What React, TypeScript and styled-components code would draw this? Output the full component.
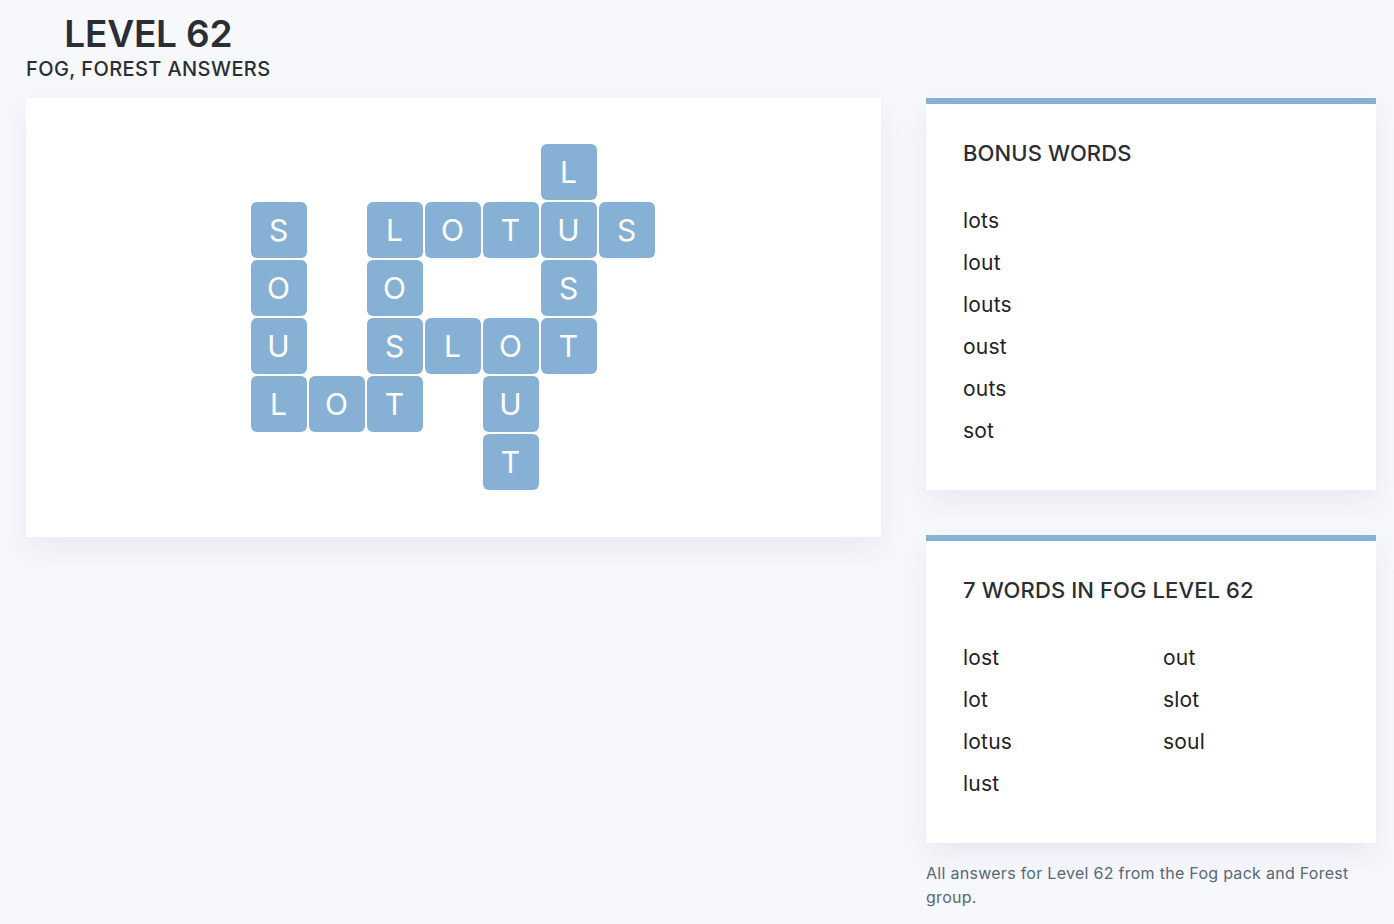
import React from "react";
import styled, { createGlobalStyle } from "styled-components";

const Global = createGlobalStyle`
  html, body { margin: 0; padding: 0; background: #f7f8fc; }
  body { font-family: Inter, "Noto Sans", "Liberation Sans", sans-serif; color: #2b2e34; }
`;

const Page = styled.div`
  padding: 13px 18px 20px 26px;
`;

const Header = styled.header`
  display: inline-flex;
  flex-direction: column;
  align-items: center;
  margin-bottom: 15px;
`;

const Title = styled.h1`
  margin: 0;
  font-size: 37px;
  line-height: 42px;
  font-weight: 600;
  letter-spacing: -0.2px;
  color: #2b2e34;
`;

const Subtitle = styled.h2`
  margin: 0;
  font-size: 20px;
  line-height: 28px;
  font-weight: 500;
  letter-spacing: 0.4px;
  color: #2b2e34;
`;

const Main = styled.div`
  display: flex;
  align-items: flex-start;
  gap: 45px;
`;

const BoardCard = styled.section`
  width: 855px;
  height: 439px;
  background: #fff;
  box-shadow: 0 12px 28px rgba(40, 60, 110, 0.07);
  display: flex;
  align-items: center;
  justify-content: center;
`;

const Board = styled.div`
  display: grid;
  grid-template-columns: repeat(7, 56px);
  grid-template-rows: repeat(6, 56px);
  gap: 2px;
  transform: translate(-1px, -1px);
`;

const Tile = styled.div<{ $empty?: boolean }>`
  border-radius: 6px;
  background: ${(p) => (p.$empty ? "transparent" : "#87b1d4")};
  color: #fff;
  font-size: 30px;
  font-weight: 400;
  display: flex;
  align-items: center;
  justify-content: center;
`;

const Side = styled.aside`
  width: 450px;
  display: flex;
  flex-direction: column;
  gap: 45px;
`;

const Card = styled.section`
  background: #fff;
  border-top: 6px solid #87b1d4;
  padding: 37px 37px 38px;
  box-shadow: 0 12px 28px rgba(40, 60, 110, 0.07);
`;

const CardTitle = styled.h3`
  margin: 0 0 35px;
  font-size: 22px;
  line-height: 24px;
  font-weight: 500;
  letter-spacing: 0.1px;
  color: #2b2e34;
`;

const WordList = styled.ul<{ $cols?: number }>`
  list-style: none;
  margin: 0;
  padding: 0;
  column-count: ${(p) => p.$cols ?? 1};
  column-gap: 0;
  width: ${(p) => (p.$cols && p.$cols > 1 ? "400px" : "auto")};
`;

const Word = styled.li`
  font-size: 21px;
  line-height: 42px;
  letter-spacing: 0.2px;
  color: #1f2126;
  break-inside: avoid;
`;

const Note = styled.p`
  margin: -27px 0 0;
  font-size: 16px;
  line-height: 24px;
  letter-spacing: 0.28px;
  color: #56677a;
`;

const layout = [
  ".....L.",
  "S.LOTUS",
  "O.O..S.",
  "U.SLOT.",
  "LOT.U..",
  "....T..",
];

const bonus = ["lots", "lout", "louts", "oust", "outs", "sot"];
const words = ["lost", "lot", "lotus", "lust", "out", "slot", "soul"];

export default function App() {
  return (
    <>
      <Global />
      <Page>
        <Header>
          <Title>LEVEL 62</Title>
          <Subtitle>FOG, FOREST ANSWERS</Subtitle>
        </Header>
        <Main>
          <BoardCard>
            <Board>
              {layout.flatMap((row, r) =>
                row.split("").map((ch, c) =>
                  ch === "." ? (
                    <Tile key={`${r}-${c}`} $empty />
                  ) : (
                    <Tile key={`${r}-${c}`}>{ch}</Tile>
                  )
                )
              )}
            </Board>
          </BoardCard>
          <Side>
            <Card>
              <CardTitle>BONUS WORDS</CardTitle>
              <WordList>
                {bonus.map((w) => (
                  <Word key={w}>{w}</Word>
                ))}
              </WordList>
            </Card>
            <Card>
              <CardTitle>7 WORDS IN FOG LEVEL 62</CardTitle>
              <WordList $cols={2}>
                {words.map((w) => (
                  <Word key={w}>{w}</Word>
                ))}
              </WordList>
            </Card>
            <Note>All answers for Level 62 from the Fog pack and Forest group.</Note>
          </Side>
        </Main>
      </Page>
    </>
  );
}
